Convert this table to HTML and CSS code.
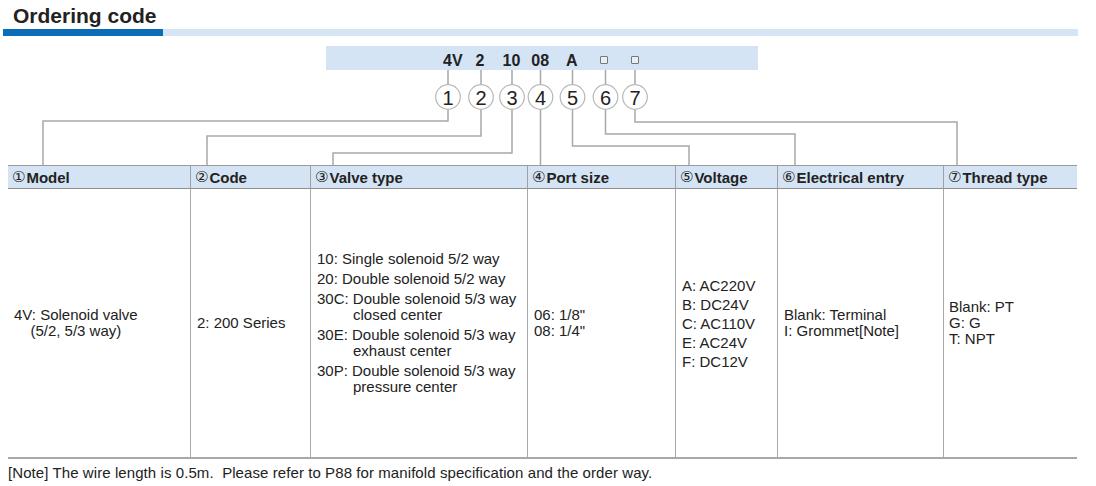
FILE: index.html
```html
<!DOCTYPE html>
<html lang="en">
<head>
<meta charset="utf-8">
<title>Ordering code</title>
<link rel="stylesheet" href="styles.css">
</head>
<body>
<div class="page">
  <h1 class="title">Ordering code</h1>
  <div class="rule"><div class="rule-dark"></div><div class="rule-light"></div></div>

  <div class="codebar">
    <span class="tk m0">4V</span>
    <span class="tk m1">2</span>
    <span class="tk m2">10</span>
    <span class="tk m3">08</span>
    <span class="tk m4">A</span>
    <span class="sq m5"></span>
    <span class="sq m6"></span>
  </div>

  <svg class="leaders" width="1096" height="95" viewBox="0 0 1096 95">
    <g fill="none" stroke="#a8a8a8" stroke-width="1.5">
      <path d="M448 0V14.5M448 39.5V51H43V95"/>
      <path d="M481 0V14.5M481 39.5V66H207V95"/>
      <path d="M512 0V14.5M512 39.5V83H333V95"/>
      <path d="M540.5 0V14.5M540.5 39.5V95"/>
      <path d="M572.5 0V14.5M572.5 39.5V76H689V95"/>
      <path d="M605.5 0V14.5M605.5 39.5V64H795V95"/>
      <path d="M635 0V14.5M635 39.5V52H957V95"/>
    </g>
    <g fill="#fff" stroke="#b8b8b8" stroke-width="1.2">
      <circle cx="448" cy="27" r="12.3"/>
      <circle cx="481" cy="27" r="12.3"/>
      <circle cx="512" cy="27" r="12.3"/>
      <circle cx="540.5" cy="27" r="12.3"/>
      <circle cx="572.5" cy="27" r="12.3"/>
      <circle cx="605.5" cy="27" r="12.3"/>
      <circle cx="635" cy="27" r="12.3"/>
    </g>
    <g class="cnum" text-anchor="middle">
      <text x="448" y="34.5">1</text>
      <text x="481" y="34.5">2</text>
      <text x="512" y="34.5">3</text>
      <text x="540.5" y="34.5">4</text>
      <text x="572.5" y="34.5">5</text>
      <text x="605.5" y="34.5">6</text>
      <text x="635" y="34.5">7</text>
    </g>
  </svg>

  <div class="spec">
    <div class="hcell"><span class="cn">①</span>Model</div>
    <div class="hcell"><span class="cn">②</span>Code</div>
    <div class="hcell"><span class="cn">③</span>Valve type</div>
    <div class="hcell"><span class="cn">④</span>Port size</div>
    <div class="hcell"><span class="cn">⑤</span>Voltage</div>
    <div class="hcell"><span class="cn">⑥</span>Electrical entry</div>
    <div class="hcell"><span class="cn">⑦</span>Thread type</div>

    <div class="bcell"><div class="model">4V: Solenoid valve<br>(5/2, 5/3 way)</div></div>
    <div class="bcell"><div>2: 200 Series</div></div>
    <div class="bcell">
      <div class="valves">
        <div class="vi">10: Single solenoid 5/2 way</div>
        <div class="vi">20: Double solenoid 5/2 way</div>
        <div class="vi">30C: Double solenoid 5/3 way<br>closed center</div>
        <div class="vi">30E: Double solenoid 5/3 way<br>exhaust center</div>
        <div class="vi">30P: Double solenoid 5/3 way<br>pressure center</div>
      </div>
    </div>
    <div class="bcell"><div class="lines">06: 1/8"<br>08: 1/4"</div></div>
    <div class="bcell"><div class="volt">A: AC220V<br>B: DC24V<br>C: AC110V<br>E: AC24V<br>F: DC12V</div></div>
    <div class="bcell"><div class="lines">Blank: Terminal<br>I: Grommet[Note]</div></div>
    <div class="bcell thread"><div class="lines">Blank: PT<br>G: G<br>T: NPT</div></div>
  </div>

  <p class="note">[Note] The wire length is 0.5m.&nbsp; Please refer to P88 for manifold specification and the order way.</p>
</div>
</body>
</html>
```

FILE: styles.css
```css
html, body {
  margin: 0;
  padding: 0;
  background: #fff;
}

body {
  font-family: "Liberation Sans", Arial, "DejaVu Sans", sans-serif;
  color: #222;
}

.page {
  width: 1096px;
  height: 486px;
  overflow: hidden;
}

.title {
  margin: 0;
  padding: 2px 0 0 13px;
  height: 27px;
  font-size: 21px;
  line-height: 27px;
  font-weight: bold;
  color: #222;
}

.rule {
  display: flex;
  margin-left: 3px;
  width: 1075px;
  height: 7px;
}

.rule-dark {
  width: 160px;
  background: #0b6cb7;
}

.rule-light {
  flex: 1;
  background: #d5e5f5;
}

.codebar {
  box-sizing: border-box;
  display: flex;
  align-items: center;
  margin: 10px 0 0 326px;
  width: 432px;
  height: 24px;
  padding: 5px 0 0 117px;
  background: #d5e4f4;
}

.tk {
  font-size: 16px;
  font-weight: bold;
  line-height: 16px;
  color: #222;
}

.sq {
  box-sizing: border-box;
  width: 8px;
  height: 8px;
  margin-bottom: 2px;
  border: 1px solid #777;
  border-radius: 1px;
  background: #e8eef6;
}

.m0 { margin-left: 0; }
.m1 { margin-left: 13px; }
.m2 { margin-left: 18px; }
.m3 { margin-left: 11px; }
.m4 { margin-left: 17px; }
.m5 { margin-left: 22px; }
.m6 { margin-left: 23px; }

.leaders {
  display: block;
}

.cnum text {
  font-family: "Liberation Sans", Arial, sans-serif;
  font-size: 20px;
  fill: #222;
}

.spec {
  display: grid;
  grid-template-columns: 182px 120px 217px 148px 102px 166px 134px;
  grid-template-rows: 24px 270px;
  margin-left: 8px;
  width: 1069px;
}

.hcell {
  display: flex;
  align-items: center;
  padding-left: 4px;
  background: #d5e4f4;
  border-top: 1px solid #9a9a9a;
  border-bottom: 1px solid #8e8e8e;
  font-size: 15px;
  font-weight: bold;
  color: #222;
  white-space: nowrap;
}

.hcell + .hcell {
  border-left: 1.5px solid #a0a0a0;
}

.cn {
  font-family: "DejaVu Sans", sans-serif;
  font-weight: normal;
  font-size: 15px;
  margin-right: 1px;
}

.bcell {
  display: flex;
  align-items: center;
  padding-left: 6px;
  border-left: 1.5px solid #a8a8a8;
  border-bottom: 2px solid #a8a8a8;
  font-size: 15px;
  line-height: 16px;
  color: #222;
  white-space: nowrap;
}

.bcell:nth-child(8) {
  border-left: none;
}

.model {
  text-align: center;
}

.valves {
  display: flex;
  flex-direction: column;
  gap: 4px;
}

.vi {
  padding-left: 36px;
  text-indent: -36px;
}

.volt {
  line-height: 19px;
}

.thread {
  padding-left: 5px;
}

.note {
  margin: 5px 0 0 8px;
  font-size: 15px;
  line-height: 18px;
  letter-spacing: 0.08px;
  color: #222;
}
```
